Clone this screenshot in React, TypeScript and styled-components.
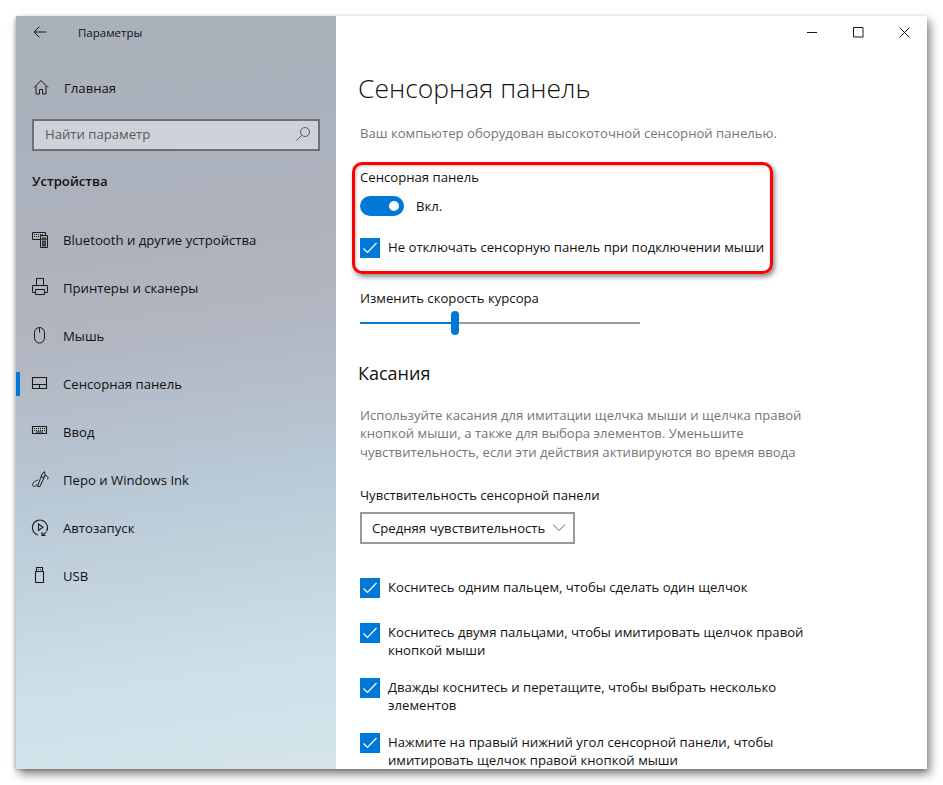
import React from 'react';
import styled, { createGlobalStyle } from 'styled-components';

const GlobalStyle = createGlobalStyle`
  html, body {
    margin: 0;
    padding: 0;
    background: #fff;
  }
  body {
    color: #111;
    font-family: "Open Sans", "Noto Sans", "Liberation Sans", sans-serif;
    font-size: 13.15px;
  }
`;

const Page = styled.div`
  height: 785px;
  overflow: hidden;
  padding: 16px 16px 0;
  box-sizing: border-box;
`;

const Win = styled.div`
  box-shadow: 3px 5px 9px rgba(0, 0, 0, 0.5), -1px 1px 3px rgba(0, 0, 0, 0.2);
  display: flex;
  height: 753px;
  overflow: hidden;
  width: 911px;
`;

const Sidebar = styled.aside`
  background: linear-gradient(172deg, #a9b1bb 0%, #adb2bd 30%, #b1b6c1 42%, #b9c9d6 62%, #cddfe7 85%, #d6e5ec 100%);
  flex: 0 0 320px;
`;

const TitleBar = styled.div`
  align-items: center;
  display: flex;
  height: 32px;
  padding-left: 16px;
`;

const TitleText = styled.span`
  font-size: 11.5px;
  margin-left: 30px;
`;

const IconBox = styled.span`
  align-items: center;
  display: flex;
  flex: 0 0 16px;
  height: 16px;
  justify-content: center;
  width: 16px;
`;

const HomeRow = styled.div`
  align-items: center;
  display: flex;
  gap: 15px;
  height: 48px;
  margin-top: 16px;
  padding-left: 17px;
`;

const SearchBox = styled.div`
  align-items: center;
  background: rgba(255, 255, 255, 0.42);
  border: 2px solid #6d7279;
  box-sizing: border-box;
  color: #55595e;
  display: flex;
  height: 32px;
  justify-content: space-between;
  margin: 7px 0 0 16px;
  padding: 0 7px 2px 11px;
  width: 288px;
`;

const SectionTitle = styled.div`
  font-weight: 600;
  height: 20px;
  line-height: 20px;
  margin: 20px 0 25px 16px;
`;

const NavItem = styled.div<{ $active?: boolean }>`
  align-items: center;
  background: ${(p) => (p.$active ? 'linear-gradient(#0078d7, #0078d7) no-repeat 0 center / 4px 24px' : 'none')};
  display: flex;
  gap: 15px;
  height: 48px;
  padding-left: 16px;
`;

const Main = styled.main`
  background: #fff;
  flex: 1;
  min-width: 0;
  padding-left: 24px;
  position: relative;
`;

const WindowButtons = styled.div`
  display: flex;
  position: absolute;
  right: 0;
  top: 0;
`;

const WinButton = styled.span`
  align-items: center;
  display: flex;
  height: 32px;
  justify-content: center;
  width: 46px;
`;

const Heading = styled.h1`
  color: #111;
  font-size: 26.5px;
  font-weight: 300;
  line-height: 36px;
  margin: 54px 0 0 -2px;
`;

const Muted = styled.p<{ $top: number }>`
  color: #767676;
  line-height: 18.5px;
  margin: ${(p) => p.$top}px 0 0;
  width: 450px;
`;

const Label = styled.div<{ $top: number }>`
  height: 20px;
  line-height: 20px;
  margin-top: ${(p) => p.$top}px;
`;

const ToggleRow = styled.div`
  align-items: center;
  display: flex;
  gap: 12px;
  height: 20px;
  margin-top: 9px;
`;

const Toggle = styled.span`
  align-items: center;
  background: #0078d7;
  border-radius: 10px;
  box-sizing: border-box;
  display: flex;
  height: 20px;
  justify-content: flex-end;
  padding-right: 5px;
  width: 44px;
`;

const Knob = styled.span`
  background: #fff;
  border-radius: 50%;
  height: 10px;
  width: 10px;
`;

const CheckRow = styled.div<{ $top: number }>`
  display: flex;
  gap: 8px;
  line-height: 18px;
  margin-top: ${(p) => p.$top}px;
  width: 450px;
`;

const CheckBox = styled.span`
  align-items: center;
  background: #0078d7;
  display: flex;
  flex: 0 0 20px;
  height: 20px;
  justify-content: center;
`;

const Slider = styled.div`
  align-items: center;
  display: flex;
  height: 24px;
  margin-top: 3px;
  width: 280px;
`;

const Track = styled.span<{ $on?: boolean; $w: number }>`
  background: ${(p) => (p.$on ? '#0078d7' : '#999')};
  height: 2px;
  width: ${(p) => p.$w}px;
`;

const Thumb = styled.span`
  background: #0078d7;
  border-radius: 4px;
  height: 24px;
  width: 8px;
`;

const SubHeading = styled.h2`
  color: #111;
  font-size: 18px;
  font-weight: 400;
  line-height: 28px;
  margin: 24px 0 0 -2px;
`;

const Select = styled.div`
  align-items: center;
  border: 2px solid #999;
  box-sizing: border-box;
  display: flex;
  height: 32px;
  justify-content: space-between;
  margin-top: 7px;
  padding: 0 7px 0 10px;
  width: 215px;
  white-space: nowrap;
`;

const Highlight = styled.div`
  border: 3.5px solid #fe0000;
  border-radius: 10px;
  box-shadow: 2px 3px 5px rgba(0, 0, 0, 0.45), inset 1px 1px 3px rgba(0, 0, 0, 0.25);
  box-sizing: border-box;
  height: 112px;
  left: 16px;
  pointer-events: none;
  position: absolute;
  top: 146px;
  width: 421px;
`;

const Svg = styled.svg`
  flex: none;
  overflow: visible;
`;

const Glyph: React.FC<{ children: React.ReactNode; w?: number; h?: number; color?: string }> = ({ children, w = 16, h = 16, color = '#1a1a1a' }) => (
  <Svg width={w} height={h} viewBox={`0 0 ${w} ${h}`} fill="none" stroke={color} strokeWidth="1">
    {children}
  </Svg>
);

const icons: Record<string, React.ReactNode> = {
  bluetooth: (
    <Glyph>
      <path d="M8 7.500H.5v-7h13v2.500" />
      <path d="M2 2.500h1M4 2.500h1M6 2.500h1M8 2.500h1M10 2.500h1M2 4.500h1M4 4.500h1M6 4.500h1" />
      <path d="M8.500 3.500h7v12h-7z" />
      <path d="M10 6h4v2h-4zM10.500 9.500h3v4.500h-3z" fill="#555" stroke="#333" />
    </Glyph>
  ),
  printer: (
    <Glyph>
      <path d="M4.500 5.500v-7h7v7M3.500 12.500h-3v-7h15v7h-3M3.500 9.500h9v5h-9z" />
    </Glyph>
  ),
  mouse: (
    <Glyph>
      <path d="M2.500 4.500a5 5 0 0 1 10 0v5.500a5 5 0 0 1-10 0zM7.500 -.5v5" />
    </Glyph>
  ),
  touchpad: (
    <Glyph>
      <path d="M.5 1.500h14v11H.5zM.5 8.500h14M7.500 8.500v4" strokeWidth="1.100" />
    </Glyph>
  ),
  keyboard: (
    <Glyph>
      <path d="M.5 2.500h14v7H.5z" strokeWidth="1.100" />
      <path d="M2 4.500h11M2 6.500h11" strokeDasharray="1 1" />
      <path d="M4 8h7" />
    </Glyph>
  ),
  pen: (
    <Glyph>
      <path d="M5.500 14.500 10 2l2.500-2.500.5 3.500L8 14.500zM9 4.500l3.500 1.300" />
      <path d="M13 3.500c3 .5 4 2.500 2 4" />
      <path d="M6 8c-4 1-7 4.500-4.500 6.500 1.500 .5 3-1 3.500-2.500" />
    </Glyph>
  ),
  autoplay: (
    <Glyph>
      <path d="M6 15A7.600 7.600 0 1 1 14.500 11.500" strokeWidth="1.100" />
      <path d="M6.500 4 11 7.300 6.500 10.500zM14 12.500 10 15.500M10 12v3.500h3.500" strokeWidth="1.100" />
    </Glyph>
  ),
  usb: (
    <Glyph>
      <path d="M3.500 3.500h8v11h-8zM4.500 3.500v-4h6v4" strokeWidth="1.100" />
      <path d="M6 1.500h1M8 1.500h1" />
    </Glyph>
  ),
};

const navItems = [
  { icon: 'bluetooth', label: 'Bluetooth и другие устройства' },
  { icon: 'printer', label: 'Принтеры и сканеры' },
  { icon: 'mouse', label: 'Мышь' },
  { icon: 'touchpad', label: 'Сенсорная панель', active: true },
  { icon: 'keyboard', label: 'Ввод' },
  { icon: 'pen', label: 'Перо и Windows Ink' },
  { icon: 'autoplay', label: 'Автозапуск' },
  { icon: 'usb', label: 'USB' },
];

const Check: React.FC = () => (
  <CheckBox>
    <svg width="16" height="14" viewBox="0 0 16 14" fill="none" stroke="#fff" strokeWidth="1.200">
      <path d="M1.500 7.500 5.500 11.500 14.500 2" />
    </svg>
  </CheckBox>
);

export default function App() {
  return (
    <Page>
      <GlobalStyle />
      <Win>
        <Sidebar>
          <TitleBar>
            <IconBox>
              <Glyph w={14} h={12}>
                <path d="M13 6H1M6.500.5 1 6l5.500 5.500" />
              </Glyph>
            </IconBox>
            <TitleText>Параметры</TitleText>
          </TitleBar>
          <HomeRow>
            <IconBox>
              <Glyph>
                <path d="M1 7.500 8 .5l7 7M3 6v8h3.500V9.500h3V14H13V6" />
              </Glyph>
            </IconBox>
            <span>Главная</span>
          </HomeRow>
          <SearchBox>
            <span>Найти параметр</span>
            <Glyph color="#55595e">
              <circle cx="10" cy="6" r="4.500" />
              <path d="M6.700 9.300 1.500 14.500" />
            </Glyph>
          </SearchBox>
          <SectionTitle>Устройства</SectionTitle>
          {navItems.map((item) => (
            <NavItem key={item.label} $active={item.active}>
              <IconBox>{icons[item.icon]}</IconBox>
              <span>{item.label}</span>
            </NavItem>
          ))}
        </Sidebar>
        <Main>
          <WindowButtons>
            <WinButton>
              <Glyph w={11} h={11}><path d="M0 5.500h10" /></Glyph>
            </WinButton>
            <WinButton>
              <Glyph w={11} h={11}><path d="M.5 .5h9.500v9.500H.5z" /></Glyph>
            </WinButton>
            <WinButton>
              <Glyph w={11} h={11}><path d="M.5 .5l10 10M10.500 .5l-10 10" /></Glyph>
            </WinButton>
          </WindowButtons>
          <Heading>Сенсорная панель</Heading>
          <Muted $top={18}>Ваш компьютер оборудован высокоточной сенсорной панелью.</Muted>
          <Label $top={24}>Сенсорная панель</Label>
          <ToggleRow>
            <Toggle><Knob /></Toggle>
            <span>Вкл.</span>
          </ToggleRow>
          <CheckRow $top={22}>
            <Check />
            <span>Не отключать сенсорную панель при подключении мыши</span>
          </CheckRow>
          <Label $top={30}>Изменить скорость курсора</Label>
          <Slider>
            <Track $on $w={91} />
            <Thumb />
            <Track $w={181} />
          </Slider>
          <SubHeading>Касания</SubHeading>
          <Muted $top={19}>Используйте касания для имитации щелчка мыши и щелчка правой кнопкой мыши, а также для выбора элементов. Уменьшите чувствительность, если эти действия активируются во время ввода</Muted>
          <Label $top={24}>Чувствительность сенсорной панели</Label>
          <Select>
            <span>Средняя чувствительность</span>
            <Glyph w={14} h={8} color="#666"><path d="M1 .5 7 6.500 13 .5" /></Glyph>
          </Select>
          <CheckRow $top={34}>
            <Check />
            <span>Коснитесь одним пальцем, чтобы сделать один щелчок</span>
          </CheckRow>
          <CheckRow $top={25}>
            <Check />
            <span>Коснитесь двумя пальцами, чтобы имитировать щелчок правой кнопкой мыши</span>
          </CheckRow>
          <CheckRow $top={19}>
            <Check />
            <span>Дважды коснитесь и перетащите, чтобы выбрать несколько элементов</span>
          </CheckRow>
          <CheckRow $top={19}>
            <Check />
            <span>Нажмите на правый нижний угол сенсорной панели, чтобы имитировать щелчок правой кнопкой мыши</span>
          </CheckRow>
          <Highlight />
        </Main>
      </Win>
    </Page>
  );
}
